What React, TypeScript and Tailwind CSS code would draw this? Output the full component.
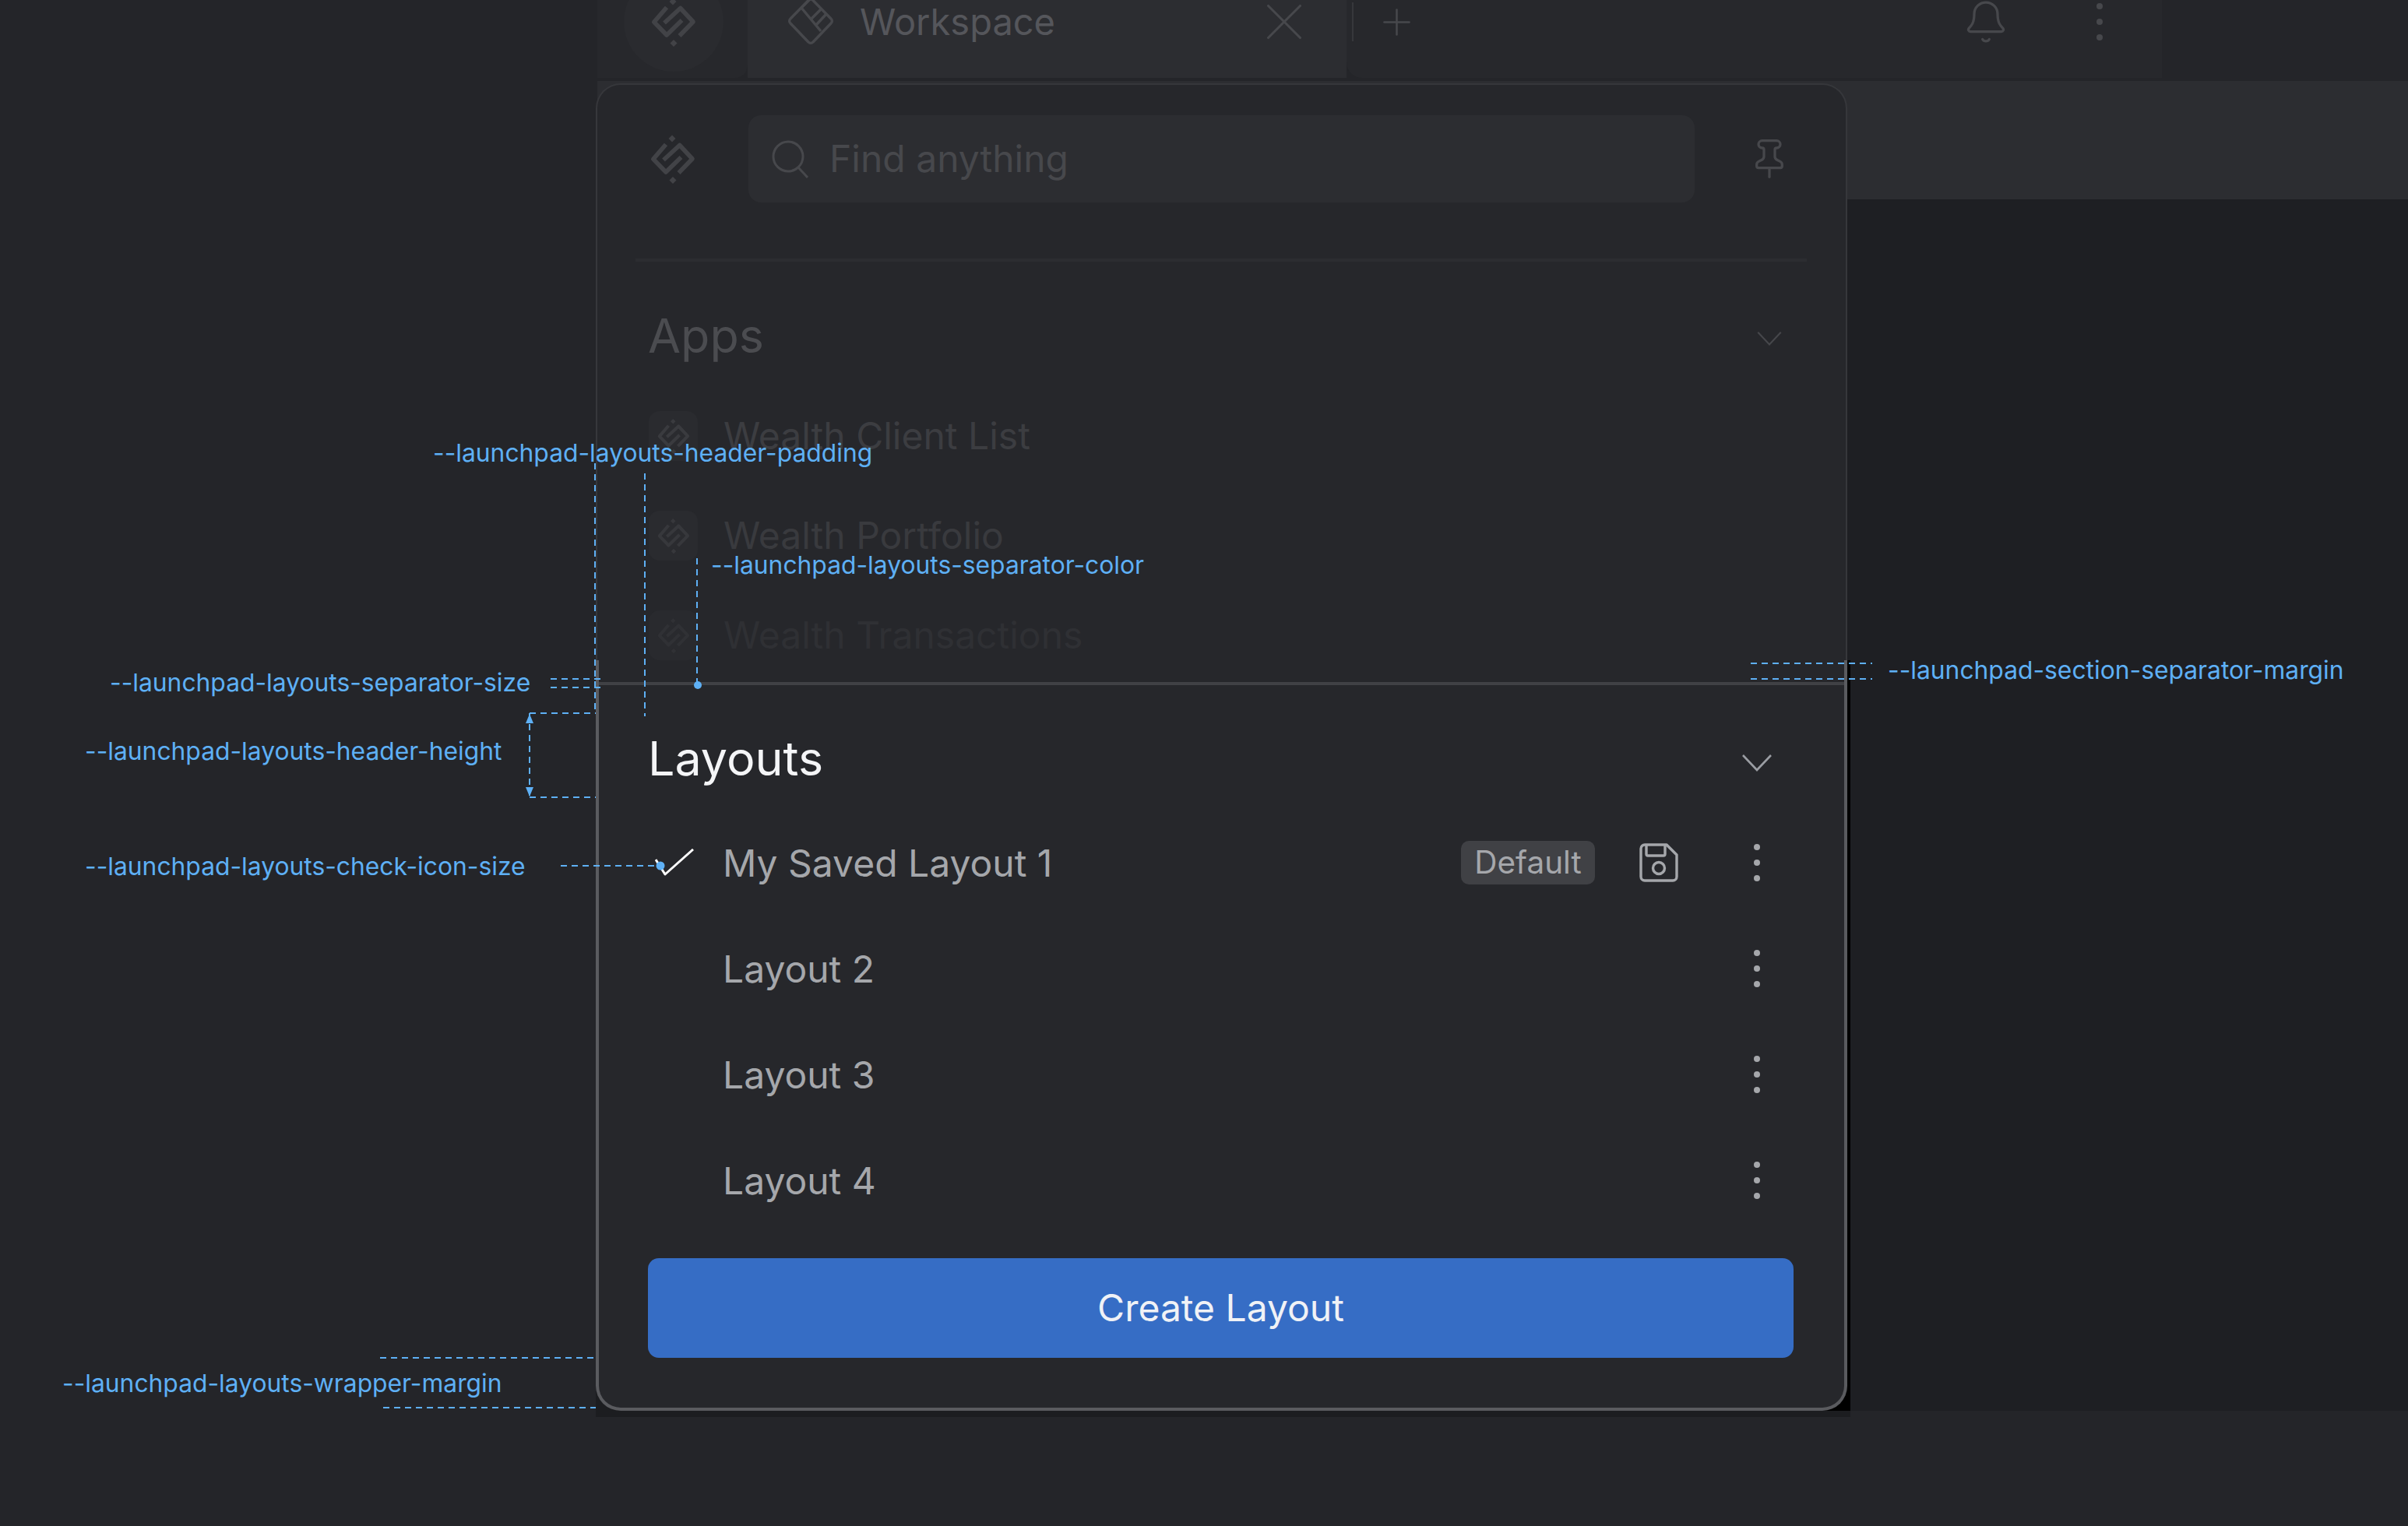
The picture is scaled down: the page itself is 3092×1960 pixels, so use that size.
import * as React from "react";
import { Bell, Pin, Plus, X } from "lucide-react";

const layouts = ["My Saved Layout 1", "Layout 2", "Layout 3", "Layout 4"];

const apps = [
  { name: "Wealth Client List", text: "text-[#3c3d41]", logo: "#3a3b3f", box: "bg-[#2a2b2f]" },
  { name: "Wealth Portfolio", text: "text-[#393a3e]", logo: "#37383c", box: "bg-[#2a2b2f]" },
  { name: "Wealth Transactions", text: "text-[#2f3034]", logo: "#303135", box: "bg-[#292a2e]" },
];

function Logo({ size = 58, color = "#3f4044" }: { size?: number; color?: string }) {
  return (
    <svg width={size} height={(size * 64) / 58} viewBox="0 0 58 64" fill="none" stroke={color} strokeWidth="5.6" strokeLinejoin="round">
      <path d="M20 13.5 3.8 32.3 20 49 39.5 30" />
      <path d="M36.5 50 54 32 37.7 14.5 17 33.5" />
      <path d="M28 1.5 32.5 6 28 10.5 23.5 6Z" fill={color} strokeWidth="0" />
      <path d="M29 55 33.5 59.5 29 64 24.5 59.5Z" fill={color} strokeWidth="0" />
    </svg>
  );
}

function WorkspaceIcon() {
  return (
    <svg width="60" height="62" viewBox="0 0 60 62" fill="none" stroke="#47484c" strokeWidth="3.4" strokeLinejoin="round">
      <path d="M27 3.5a4 4 0 0 1 6 0L56 27a4 4 0 0 1 0 6L33 57a4 4 0 0 1-6 0L4 33a4 4 0 0 1 0-6Z" />
      <path d="M18 13 43 43M30 1 18 13M43 15 30 28M50 21 37 35" />
    </svg>
  );
}

function Chevron({ color, className }: { color: string; className: string }) {
  return (
    <svg className={className} viewBox="0 0 38 22" fill="none" stroke={color} strokeWidth="2.6">
      <path d="M1 1 19 20 37 1" />
    </svg>
  );
}

function Dots({ className }: { className: string }) {
  return (
    <div className={`flex flex-col gap-[12px] ${className}`}>
      <span className="h-[8px] w-[8px] rounded-full bg-current" />
      <span className="h-[8px] w-[8px] rounded-full bg-current" />
      <span className="h-[8px] w-[8px] rounded-full bg-current" />
    </div>
  );
}

function SaveIcon() {
  return (
    <svg width="50" height="50" viewBox="0 0 50 50" fill="none" stroke="#a5a7ab" strokeWidth="3.4" strokeLinejoin="round">
      <path d="M7 2h28l13 13v28a5 5 0 0 1-5 5H7a5 5 0 0 1-5-5V7a5 5 0 0 1 5-5Z" />
      <path d="M9 2v12a2 2 0 0 0 2 2h20a2 2 0 0 0 2-2V2" />
      <circle cx="25" cy="32" r="7.5" />
    </svg>
  );
}

function CheckMark() {
  return (
    <svg width="50" height="36" viewBox="0 0 50 36" fill="none" stroke="#fff" strokeWidth="3" strokeLinejoin="round">
      <path d="M1 14 13 33 49 1" />
    </svg>
  );
}

function Annotations() {
  const dash = { stroke: "#5eb0f5", strokeWidth: 2, strokeDasharray: "8 6", fill: "none" };
  return (
    <svg className="absolute left-0 top-0" width="3092" height="1960" viewBox="0 0 3092 1960">
      <path {...dash} d="M764 595V915" />
      <path {...dash} d="M828 608V920" />
      <path {...dash} d="M895 717V878" />
      <circle cx="896" cy="880" r="5" fill="#5eb0f5" />
      <path {...dash} d="M707 872H775M707 883H775" />
      <path {...dash} d="M680 916H765M680 1024H765M680 916V1024" />
      <path d="M680 917 675 929H685Z M680 1023 675 1011H685Z" fill="#5eb0f5" />
      <path {...dash} d="M720 1112H845" />
      <circle cx="848" cy="1112" r="5.5" fill="#5eb0f5" />
      <path {...dash} d="M2248 852H2404M2248 872H2404" />
      <path {...dash} d="M488 1744H765M492 1808H765" />
    </svg>
  );
}

function Label({ className, children }: { className: string; children: React.ReactNode }) {
  return <div className={`absolute text-[31.8px] leading-[40px] text-[#5eb0f5] ${className}`}>{children}</div>;
}

export default function App() {
  return (
    <div className="relative flex h-[1960px] w-[3092px] flex-col overflow-hidden bg-[#242529] font-['Inter',sans-serif]">
      <div className="flex h-[1812px] pl-[767px]">
        <div className="flex flex-1 flex-col">
          <div className="flex h-[104px] bg-[#242529]">
            <div className="flex h-[100px] w-[193px] justify-center rounded-br-[16px] bg-[#27282c] pl-[3px]">
              <div className="-mt-[36px] flex h-[128px] w-[128px] items-center justify-center rounded-full bg-[#2a2b2f]">
                <Logo color="#424347" />
              </div>
            </div>
            <div className="flex h-[100px] w-[769px] bg-[#2c2d31]">
              <div className="flex h-[56px] flex-1 items-center pl-[51px] pr-[39px]">
                <WorkspaceIcon />
                <span className="ml-[33px] flex-1 text-[47px] text-[#55565b]">Workspace</span>
                <X size={82} strokeWidth={0.9} color="#47484c" />
              </div>
            </div>
            <div className="flex h-[100px] w-[1047px] rounded-bl-[20px] bg-[#27282c]">
              <div className="flex h-[56px] flex-1 items-center pl-[7px] pr-[76px] text-[#47484c]">
                <div className="h-[50px] w-[2px] bg-[#36373b]" />
                <Plus size={55} strokeWidth={1.1} className="ml-[28px]" />
                <div className="flex-1" />
                <Bell size={60} strokeWidth={1.3} className="mr-[112px]" />
                <Dots className="text-[#47484c]" />
              </div>
            </div>
          </div>
          <div className="h-[152px] bg-[#2c2d31]" />
          <div className="flex-1 bg-[#1e1f23]" />
        </div>
      </div>

      {/* launchpad panel */}
      <div className="absolute left-[765px] top-[107px] w-[1611px]">
        <div className="h-[741px] w-[1607px] overflow-hidden rounded-t-[32px] border-x-2 border-t-2 border-[#36373b] bg-[#26272b]">
          <div className="flex h-[223px] items-start px-[67px] pt-[39px]">
            <div className="mt-[24px] w-[127px] pl-[1px]">
              <Logo color="#424347" />
            </div>
            <div className="flex h-[112px] w-[1215px] items-center rounded-[16px] bg-[#2c2d31] pl-[28px]">
              <svg width="50" height="50" viewBox="0 0 50 50" fill="none" stroke="#47484c" strokeWidth="3">
                <circle cx="23" cy="22" r="19" />
                <path d="M36 36 48 49" />
              </svg>
              <span className="ml-[26px] text-[48px] text-[#47484c]">Find anything</span>
            </div>
            <Pin size={56} strokeWidth={1.4} color="#47484c" className="ml-[68px] mt-[28px]" />
          </div>
          <div className="mx-[49px] h-[4px] w-[1504px] bg-[#2c2d31]" />
          <div className="flex h-[192px] items-center justify-between pl-[65px] pr-[82px]">
            <span className="text-[61px] text-[#4b4c50]">Apps</span>
            <Chevron color="#46474b" className="mt-[6px] h-[18px] w-[32px]" />
          </div>
          <div className="flex flex-col gap-[64px] pl-[66px]">
            {apps.map((app) => (
              <div key={app.name} className="flex h-[64px] items-center">
                <div className={`flex h-[64px] w-[63px] items-center justify-center rounded-[14px] ${app.box}`}>
                  <Logo size={42} color={app.logo} />
                </div>
                <span className={`ml-[33px] text-[48px] ${app.text}`}>{app.name}</span>
              </div>
            ))}
          </div>
        </div>

        <div className="border-b-[8px] border-[#1c1d20] bg-[linear-gradient(90deg,#1c1d20_50%,#000_50%)] pr-[4px]">
          <div className="h-[964px] rounded-b-[32px] border-x-4 border-b-4 border-[#5a5b5f] bg-[#26272b] pt-[28px]">
            <div className="h-[4px] bg-[#404145]" />
            <div className="mt-[36px] flex h-[108px] items-center justify-between pl-[63px] pr-[93px]">
              <span className="mt-[10px] text-[61px] text-[#f4f5f7]">Layouts</span>
              <Chevron color="#9a9da3" className="mt-[20px] h-[22px] w-[38px]" />
            </div>
            <div className="mt-[16px] flex flex-col">
              {layouts.map((name, i) => (
                <div key={name} className="flex h-[136px] items-center pl-[72px] pr-[108px]">
                  <div className="w-[87px]">{i === 0 && <CheckMark />}</div>
                  <span className="mt-[2px] flex-1 text-[48px] text-[#a5a7ab]">{name}</span>
                  {i === 0 && (
                    <>
                      <span className="flex h-[56px] w-[172px] items-center justify-center rounded-[10px] bg-[#404145] text-[40.5px] text-[#a5a7ab]">
                        Default
                      </span>
                      <div className="ml-[57px] mr-[97px]">
                        <SaveIcon />
                      </div>
                    </>
                  )}
                  <Dots className="text-[#a5a7ab]" />
                </div>
              ))}
            </div>
            <div className="ml-[63px] mr-[65px] mt-[32px] flex h-[128px] items-center justify-center rounded-[14px] bg-[#366dc5] text-[48px] text-[#f0f2f6]">
              Create Layout
            </div>
          </div>
        </div>
      </div>

      <Annotations />
      <Label className="left-[556px] top-[562px]">--launchpad-layouts-header-padding</Label>
      <Label className="left-[913px] top-[706px]">--launchpad-layouts-separator-color</Label>
      <Label className="left-[141px] top-[857px]">--launchpad-layouts-separator-size</Label>
      <Label className="left-[109px] top-[945px]">--launchpad-layouts-header-height</Label>
      <Label className="left-[109px] top-[1093px]">--launchpad-layouts-check-icon-size</Label>
      <Label className="left-[2424px] top-[841px]">--launchpad-section-separator-margin</Label>
      <Label className="left-[80px] top-[1757px]">--launchpad-layouts-wrapper-margin</Label>
    </div>
  );
}
